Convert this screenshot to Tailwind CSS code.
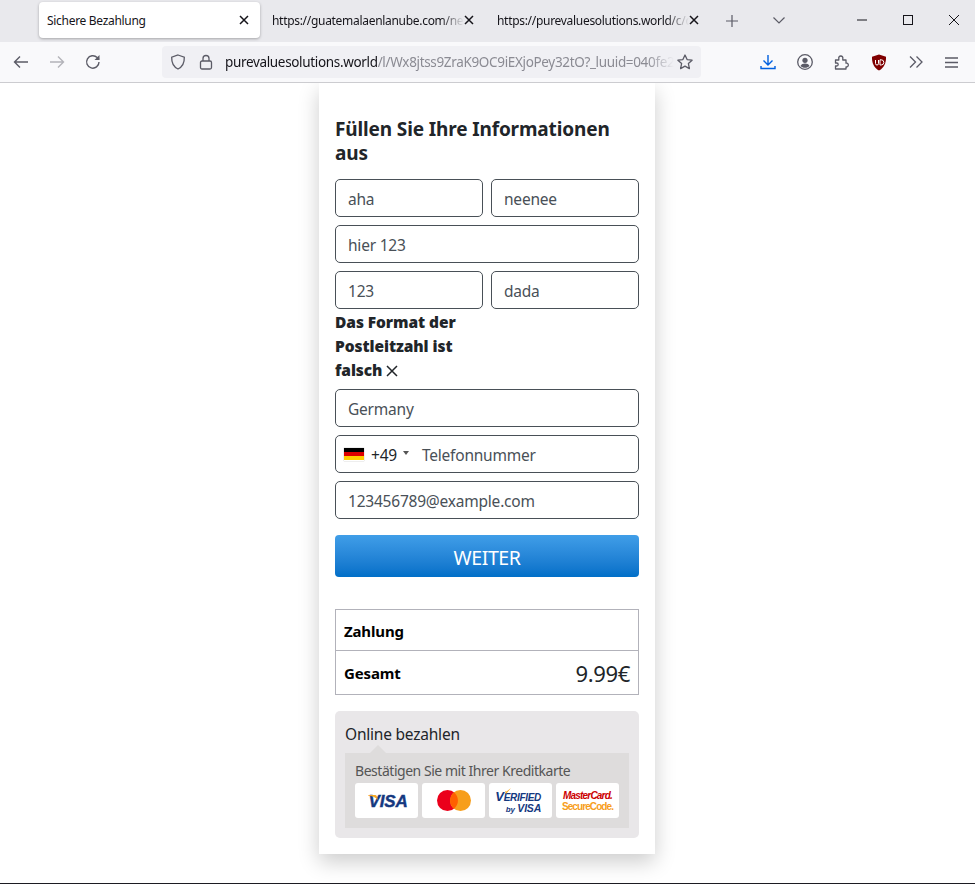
<!DOCTYPE html>
<html lang="de">
<head>
<meta charset="UTF-8">
<title>Sichere Bezahlung</title>
<script src="https://cdn.jsdelivr.net/npm/@tailwindcss/browser@4"></script>
</head>
<body class="bg-white font-['Noto_Sans','Open_Sans',sans-serif] text-[#212529]">
<div class="flex flex-col h-[884px] w-[975px] overflow-hidden">

  <!-- Tab strip -->
  <div class="flex items-start h-[42px] bg-[#e9e9ed] text-[#15141a] text-[12px] shrink-0">
    <div class="flex items-center justify-between ml-[39px] mt-[2px] w-[221px] h-[36px] pl-[8px] pr-[11px] bg-white rounded-[4px] shadow-[0_1px_3px_rgba(0,0,0,0.3)]">
      <span class="mt-[2px] tracking-[-0.025em]">Sichere Bezahlung</span>
      <svg class="w-[10px] h-[10px]" viewBox="0 0 10 10" fill="none" stroke="#15141a" stroke-width="1.5"><path d="M1 1l8 8M9 1l-8 8"/></svg>
    </div>
    <div class="flex items-center w-[225px] h-[36px] mt-[2px] pl-[12px] pr-[11px]">
      <span class="w-[192px] mt-[2px] tracking-[-0.025em] whitespace-nowrap overflow-hidden [mask-image:linear-gradient(to_right,black_88%,transparent)]">https://guatemalaenlanube.com/net/pago</span>
      <svg class="w-[10px] h-[10px]" viewBox="0 0 10 10" fill="none" stroke="#15141a" stroke-width="1.5"><path d="M1 1l8 8M9 1l-8 8"/></svg>
    </div>
    <div class="flex items-center w-[225px] h-[36px] mt-[2px] pl-[12px]">
      <span class="w-[192px] mt-[2px] tracking-[-0.025em] whitespace-nowrap overflow-hidden [mask-image:linear-gradient(to_right,black_88%,transparent)]">https://purevaluesolutions.world/c/checkout</span>
      <svg class="w-[10px] h-[10px]" viewBox="0 0 10 10" fill="none" stroke="#15141a" stroke-width="1.5"><path d="M1 1l8 8M9 1l-8 8"/></svg>
    </div>
    <svg class="w-[12px] h-[12px] ml-[16px] mt-[15px]" viewBox="0 0 12 12" fill="none" stroke="#5b5b66" stroke-width="1.2"><path d="M6 0v12M0 6h12"/></svg>
    <svg class="w-[12px] h-[7px] ml-[35px] mt-[17px]" viewBox="0 0 12 7" fill="none" stroke="#5b5b66" stroke-width="1.2"><path d="M.5.5L6 6l5.500-5.500"/></svg>
    <svg class="w-[10px] h-[10px] ml-[72px] mt-[15px]" viewBox="0 0 10 10" fill="none" stroke="#15141a" stroke-width="1"><path d="M0 5h10"/></svg>
    <svg class="w-[10px] h-[10px] ml-[36px] mt-[15px]" viewBox="0 0 10 10" fill="none" stroke="#15141a" stroke-width="1"><rect x=".5" y=".5" width="9" height="9"/></svg>
    <svg class="w-[10px] h-[10px] ml-[36px] mt-[15px]" viewBox="0 0 10 10" fill="none" stroke="#15141a" stroke-width="1"><path d="M0 0l10 10M10 0L0 10"/></svg>
  </div>

  <!-- Toolbar -->
  <div class="flex items-center h-[41px] bg-[#f9f9fb] border-b border-[#ccccd0] shrink-0">
    <svg class="w-[16px] h-[16px] ml-[13px]" viewBox="0 0 16 16" fill="none" stroke="#5b5b66" stroke-width="1.4"><path d="M15 8H1.500M7 2.500L1.500 8 7 13.500"/></svg>
    <svg class="w-[16px] h-[16px] ml-[20px]" viewBox="0 0 16 16" fill="none" stroke="#b3b3b9" stroke-width="1.4"><path d="M1 8h13.500M9 2.500L14.500 8 9 13.500"/></svg>
    <svg class="w-[16px] h-[16px] ml-[20px]" viewBox="0 0 16 16" fill="none" stroke="#5b5b66" stroke-width="1.4"><path d="M14 8a6.200 6.200 0 1 1-1.800-4.400L14 5.500"/><path d="M14.500 1v5h-5" fill="#5b5b66" stroke="none"/></svg>

    <div class="flex items-center w-[539px] h-[32px] ml-[61px] bg-[#f0f0f4] rounded-[4px] text-[13.5px]">
      <svg class="w-[16px] h-[16px] ml-[8px]" viewBox="0 0 16 16" fill="none" stroke="#5b5b66" stroke-width="1.3"><path d="M8 1l6.300 2.200c.2 5-1.600 9.400-6.300 11.800C3.300 12.600 1.500 8.200 1.700 3.200z"/></svg>
      <svg class="w-[14px] h-[16px] ml-[13px]" viewBox="0 0 14 16" fill="none" stroke="#5b5b66" stroke-width="1.3"><rect x="1.500" y="7" width="11" height="8" rx="1.500"/><path d="M4 7V4.500a3 3 0 0 1 6 0V7"/></svg>
      <span class="ml-[12px] mt-[1px] w-[449px] whitespace-nowrap overflow-hidden tracking-[-0.025em] text-[#15141a] [mask-image:linear-gradient(to_right,black_94%,transparent)]">purevaluesolutions.world<span class="text-[#8b8b93]">/l/Wx8jtss9ZraK9OC9iEXjoPey32tO?_luuid=040fe2d1a8</span></span>
      <svg class="w-[16px] h-[16px] ml-[3px]" viewBox="0 0 16 16" fill="none" stroke="#5b5b66" stroke-width="1.3" stroke-linejoin="round"><path d="M8 1l2.100 4.600 5 .6-3.700 3.400 1 5L8 12.100l-4.400 2.500 1-5L.9 6.200l5-.6z"/></svg>
    </div>

    <svg class="w-[16px] h-[16px] ml-[59px]" viewBox="0 0 16 16" fill="none" stroke="#0060df" stroke-width="1.4"><path d="M8 1v10M3.500 6.500L8 11l4.500-4.500M1 12v2.500h14V12"/></svg>
    <svg class="w-[16px] h-[16px] ml-[21px]" viewBox="0 0 16 16"><circle cx="8" cy="8" r="7.300" fill="none" stroke="#5b5b66" stroke-width="1.300"/><circle cx="8" cy="6.300" r="2.600" fill="#5b5b66"/><path d="M3.500 12c1-2 2.500-2.600 4.500-2.600s3.500.6 4.500 2.600c-1.200 1.200-2.700 1.800-4.500 1.800S4.700 13.200 3.500 12z" fill="#5b5b66"/></svg>
    <svg class="w-[16px] h-[16px] ml-[21px]" viewBox="0 0 16 16" fill="none" stroke="#5b5b66" stroke-width="1.300" stroke-linejoin="round"><path d="M1.500 6h3.300V4.500a2 2 0 0 1 2-2.500 2 2 0 0 1 2 2.500V6h3.200v3.200h1a2 2 0 0 1 0 3.800h-1v2H1.500v-3h1.200a1.500 1.500 0 0 0 0-3H1.500z"/></svg>
    <svg class="w-[16px] h-[17px] ml-[21px]" viewBox="0 0 16 17"><path d="M8 .5l7 2.200c.3 6-1.800 11-7 13.800C2.800 13.700.7 8.700 1 2.700z" fill="#800000"/><path d="M4.500 6v3.500a1.500 1.500 0 0 0 3 0V6M9 5.800v5.200h1.200a2.600 2.600 0 0 0 0-5.200z" fill="none" stroke="#fff" stroke-width="1"/></svg>
    <svg class="w-[14px] h-[12px] ml-[22px]" viewBox="0 0 14 12" fill="none" stroke="#5b5b66" stroke-width="1.300"><path d="M1 .5L6.500 6 1 11.500M7.500.5L13 6l-5.500 5.500"/></svg>
    <svg class="w-[13px] h-[11px] ml-[22px]" viewBox="0 0 13 11" fill="none" stroke="#5b5b66" stroke-width="1.300"><path d="M0 1h13M0 5.500h13M0 10h13"/></svg>
  </div>

  <!-- Page -->
  <div class="flex-1 flex justify-center pr-[1px] overflow-hidden border-b border-[#1c1b22]">
    <div class="w-[336px] h-[771px] px-[16px] pt-[34px] bg-white shadow-[0_8px_20px_rgba(0,0,0,0.2)]">
      <h1 class="text-[19px] leading-[24px] font-bold tracking-[-0.007em] text-[#212529]">Füllen Sie Ihre Informationen aus</h1>

      <div class="flex flex-col gap-[8px] mt-[14px] text-[15.5px] text-[#495057] tracking-[-0.014em]">
        <div class="flex gap-[8px]">
          <div class="flex items-center w-[148px] h-[38px] px-[12px] pt-[4px] border border-[#495057] rounded-[5px]">aha</div>
          <div class="flex items-center w-[148px] h-[38px] px-[12px] pt-[4px] border border-[#495057] rounded-[5px]">neenee</div>
        </div>
        <div class="flex items-center h-[38px] px-[12px] pt-[4px] border border-[#495057] rounded-[5px]">hier 123</div>
        <div class="flex gap-[8px]">
          <div class="flex items-center w-[148px] h-[38px] px-[12px] pt-[4px] border border-[#495057] rounded-[5px]">123</div>
          <div class="flex items-center w-[148px] h-[38px] px-[12px] pt-[4px] border border-[#495057] rounded-[5px]">dada</div>
        </div>
      </div>

      <p class="w-[148px] mt-[1px] mb-[7px] text-[15.5px] leading-[24px] font-black tracking-[-0.005em] text-[#212529]">Das Format der Postleitzahl ist falsch <svg class="inline-block w-[12px] h-[12px] mb-[2px]" viewBox="0 0 12 12" fill="none" stroke="#212529" stroke-width="1.5"><path d="M1 1l10 10M11 1L1 11"/></svg></p>

      <div class="flex flex-col gap-[8px] text-[15.5px] text-[#495057] tracking-[-0.014em]">
        <div class="flex items-center h-[38px] px-[12px] pt-[4px] border border-[#495057] rounded-[5px]">Germany</div>
        <div class="flex items-center h-[38px] pl-[8px] border border-[#495057] rounded-[5px]">
          <div class="flex flex-col w-[20px] h-[13px] shadow-[0_0_1px_rgba(0,0,0,0.4)]">
            <div class="flex-1 bg-black"></div>
            <div class="flex-1 bg-[#dd0000]"></div>
            <div class="flex-1 bg-[#ffce00]"></div>
          </div>
          <span class="ml-[7px] mt-[4px] text-[#212529]">+49</span>
          <div class="ml-[6px] mb-[2px] w-0 h-0 border-x-[3px] border-x-transparent border-t-[4px] border-t-[#555555]"></div>
          <span class="ml-[13px] mt-[4px]">Telefonnummer</span>
        </div>
        <div class="flex items-center h-[38px] px-[12px] pt-[4px] border border-[#495057] rounded-[5px]">123456789@example.com</div>
      </div>

      <button class="block w-full h-[42px] mt-[16px] pt-[4px] rounded-[4px] bg-gradient-to-b from-[#409ee8] to-[#006fc8] text-white text-[19.5px] tracking-[-0.02em]">WEITER</button>

      <div class="mt-[32px] border border-[#b2b2ba] text-black">
        <div class="flex items-center h-[41px] px-[8px] pt-[3px] border-b border-[#b2b2ba] text-[15px] font-bold tracking-[-0.01em]">Zahlung</div>
        <div class="flex items-center justify-between h-[43px] px-[8px] text-[15px] font-bold tracking-[-0.01em]">
          <span class="mt-[2px]">Gesamt</span>
          <span class="text-[22px] mt-[2px] font-normal tracking-[-0.015em] text-[#212529]">9.99€</span>
        </div>
      </div>

      <div class="relative h-[127px] mt-[16px] px-[10px] pt-[11px] bg-[#e9e7e9] rounded-[5px]">
        <div class="text-[15.5px] leading-[24px] tracking-[-0.014em] text-[#212529]">Online bezahlen</div>
        <div class="absolute left-[35px] top-[34px] w-0 h-0 border-x-[8px] border-x-transparent border-b-[8px] border-b-[#dedcdc]"></div>
        <div class="mt-[7px] h-[75px] px-[10px] pt-[8px] bg-[#dedcdc]">
          <div class="text-[14px] leading-[20px] tracking-[-0.033em] text-[#555555]">Bestätigen Sie mit Ihrer Kreditkarte</div>
          <div class="flex gap-[4px] mt-[2px]">
            <div class="flex items-center justify-center relative w-[63px] h-[35px] bg-white rounded-[3px]">
              <svg class="absolute left-[13px] top-[12px] w-[10px] h-[6px]" viewBox="0 0 10 6"><path d="M0 0h7c1.500 0 2 1 3 5C7 2 4 .8 0 .5z" fill="#f7a823"/></svg>
              <span class="font-['Liberation_Sans'] mt-[2px] italic font-bold text-[17px] tracking-[-0.01em] [-webkit-text-stroke:0.4px_#14387f] text-[#14387f] ml-[3px]">VISA</span>
            </div>
            <div class="flex items-center justify-center w-[63px] h-[35px] bg-white rounded-[3px]">
              <svg class="w-[34px] h-[21px]" viewBox="0 0 34 21"><circle cx="10.500" cy="10.500" r="10.500" fill="#eb001b"/><circle cx="23.500" cy="10.500" r="10.500" fill="#f79e1b"/><path d="M17 2.300a10.500 10.500 0 0 1 0 16.400 10.500 10.500 0 0 1 0-16.400z" fill="#ff5f00"/></svg>
            </div>
            <div class="relative flex flex-col items-end justify-center w-[63px] h-[35px] pr-[11px] bg-white rounded-[3px] font-['Liberation_Sans'] italic font-bold text-[#14387f] leading-[11px]">
              <svg class="absolute left-[13px] top-[5px] w-[10px] h-[7px]" viewBox="0 0 10 7"><path d="M0 2l3 1 1 3 5-6-4.500 3.500z" fill="#f7a823"/></svg>
              <span class="text-[10px] tracking-[-0.03em] mt-[4px]"><span class="text-[13px]">V</span>ERIFIED</span>
              <span class="text-[10.500px] tracking-[-0.02em]"><span class="text-[8px]">by</span> VISA</span>
            </div>
            <div class="flex flex-col items-center justify-center w-[63px] h-[35px] pt-[1px] bg-white rounded-[3px] font-['Liberation_Sans'] leading-[11px]">
              <span class="text-[10px] font-bold italic tracking-[-0.08em] text-[#cc0000]">MasterCard.</span>
              <span class="text-[10px] font-bold tracking-[-0.09em] text-[#f79e1b]">SecureCode.</span>
            </div>
          </div>
        </div>
      </div>
    </div>
  </div>
</div>
</body>
</html>
